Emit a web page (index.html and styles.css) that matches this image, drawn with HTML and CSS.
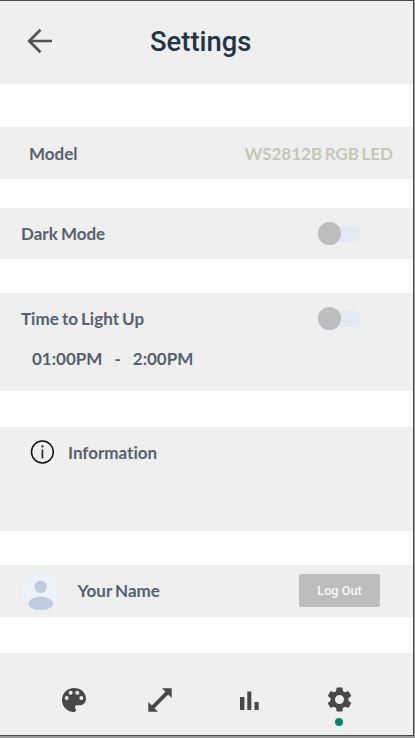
FILE: index.html
```
<!DOCTYPE html>
<html lang="en">
<head>
<meta charset="utf-8">
<title>Settings</title>
<link rel="stylesheet" href="styles.css">
</head>
<body>
<div class="screen">
  <header class="header">
    <svg class="back" viewBox="0 0 26 26"><path d="M25 13H2M13.5 1.8 2.2 13 13.5 24.2" fill="none" stroke="#525252" stroke-width="2.7"/></svg>
    <h1 class="title">Settings</h1>
  </header>
  <main class="content">
    <section class="row row-model">
      <span class="label">Model</span>
      <span class="value">WS2812B RGB LED</span>
    </section>
    <section class="row row-dark">
      <span class="label">Dark Mode</span>
      <span class="switch"><span class="knob"></span></span>
    </section>
    <section class="timer">
      <div class="timer-head">
        <span class="label">Time to Light Up</span>
        <span class="switch"><span class="knob"></span></span>
      </div>
      <div class="times"><span class="from">01:00PM</span><span class="dash">-</span><span class="to">2:00PM</span></div>
    </section>
    <section class="info">
      <svg class="info-icon" viewBox="0 0 24 24"><circle cx="12.4" cy="12" r="10.9" fill="none" stroke="#111" stroke-width="1.5"/><path d="M12.4 9.6v8.8" stroke="#222" stroke-width="1.6"/><circle cx="12.4" cy="6.4" r="1.1" fill="#222"/></svg>
      <span class="label info-label">Information</span>
    </section>
    <section class="row row-user">
      <svg class="avatar" viewBox="0 0 40 40"><circle cx="20.5" cy="20" r="19.5" fill="#eff1f8"/><circle cx="20.7" cy="15.8" r="6.2" fill="#bfccdb"/><ellipse cx="20.8" cy="32.4" rx="12.3" ry="6.7" fill="#bfccdb"/></svg>
      <span class="label name">Your Name</span>
      <button class="logout">Log Out</button>
    </section>
  </main>
  <nav class="nav">
    <svg class="icon palette" viewBox="3 3 18 18"><path d="M12 3a9 9 0 0 0 0 18c.83 0 1.5-.67 1.5-1.5 0-.39-.15-.74-.39-1.01-.23-.26-.38-.61-.38-.99 0-.83.67-1.5 1.5-1.5H16c2.76 0 5-2.24 5-5 0-4.42-4.03-8-9-8zm-5.5 9a1.5 1.5 0 1 1 0-3 1.5 1.5 0 0 1 0 3zm3-4a1.5 1.5 0 1 1 0-3 1.5 1.5 0 0 1 0 3zm5 0a1.5 1.5 0 1 1 0-3 1.5 1.5 0 0 1 0 3zm3 4a1.5 1.5 0 1 1 0-3 1.5 1.5 0 0 1 0 3z"/></svg>
    <svg class="icon expand" viewBox="0 0 24 24"><path d="M14 .3h9.7V10l-3.5-3.5L6.5 20.2l3.5 3.5H.3V14l3.5 3.5L17.5 3.8z"/></svg>
    <svg class="icon bars" viewBox="0 0 19 19"><path d="M0 6h4.4v13H0zM7.3.5h4V19h-4zM14.5 11h4.2v8h-4.2z"/></svg>
    <span class="tab">
      <svg class="icon gear" viewBox="2 2 20 20"><path d="M19.14 12.94c.04-.3.06-.61.06-.94 0-.32-.02-.64-.07-.94l2.03-1.58c.18-.14.23-.41.12-.61l-1.92-3.32c-.12-.22-.37-.29-.59-.22l-2.39.96c-.5-.38-1.03-.7-1.62-.94l-.36-2.54c-.04-.24-.24-.41-.48-.41h-3.84c-.24 0-.43.17-.47.41l-.36 2.54c-.59.24-1.13.57-1.62.94l-2.39-.96c-.22-.08-.47 0-.59.22L2.74 8.87c-.12.21-.08.47.12.61l2.03 1.58c-.05.3-.09.63-.09.94s.02.64.07.94l-2.03 1.58c-.18.14-.23.41-.12.61l1.92 3.32c.12.22.37.29.59.22l2.39-.96c.5.38 1.03.7 1.62.94l.36 2.54c.05.24.24.41.48.41h3.84c.24 0 .44-.17.47-.41l.36-2.54c.59-.24 1.13-.56 1.62-.94l2.39.96c.22.08.47 0 .59-.22l1.92-3.32c.12-.22.07-.47-.12-.61l-2.01-1.58zM12 15.6A3.61 3.61 0 0 1 8.4 12c0-1.98 1.62-3.6 3.6-3.6s3.6 1.62 3.6 3.6-1.62 3.6-3.6 3.6z"/></svg>
      <span class="dot"></span>
    </span>
  </nav>
</div>
</body>
</html>
```
FILE: styles.css
```
* { box-sizing: border-box; }
html { background: #999; }
body { margin: 0; width: 415px; height: 738px; overflow: hidden; background: #999; }
.screen {
  display: flex;
  flex-direction: column;
  width: 414px;
  height: 736px;
  background: #fff;
  border: solid #4a4a4a;
  border-width: 1px 1px 1px 0;
  font-family: Lato, sans-serif;
  font-variant-ligatures: none;
}
.header { display: flex; align-items: center; height: 83px; padding-left: 27px; background: #efefef; }
.back { width: 26px; height: 26px; margin-top: -4px; }
.title { margin: -2px 0 0 97px; font: 500 27.4px/32px Roboto, sans-serif; color: #243447; }
.content { display: flex; flex-direction: column; flex: 1; padding-top: 43px; }
.label { font-size: 17px; line-height: 20px; font-weight: 700; color: #56616d; white-space: nowrap; word-spacing: -1px; }
.row { display: flex; align-items: center; height: 52px; background: #efefef; }
.row-model { justify-content: space-between; padding: 2px 20px 0 29px; }
.value { font-size: 17px; line-height: 20px; font-weight: 700; color: #c5c6b8; white-space: nowrap; word-spacing: -1.6px; }
.row-dark { justify-content: space-between; height: 51px; margin-top: 29px; padding: 0 52.5px 0 21px; }
.switch { display: flex; align-items: center; width: 34px; height: 16px; margin-left: auto; border-radius: 8px; background: #e4e8f1; }
.knob { flex: none; width: 23px; height: 23px; margin-left: -9px; border-radius: 50%; background: #bcbdbf; }
.timer { height: 98px; margin-top: 34px; padding: 15px 52.5px 0 21px; background: #efefef; }
.timer-head { display: flex; align-items: center; height: 21px; }
.times { display: flex; margin: 20px 0 0 11px; font-size: 17px; line-height: 20px; font-weight: 700; color: #56616d; }
.dash { margin: 0 12px; }
.info { display: flex; align-items: flex-start; height: 104px; margin-top: 36px; padding: 13px 0 0 30px; background: #efefef; }
.info-icon { width: 24px; height: 24px; }
.info-label { margin: 3px 0 0 14px; }
.row-user { margin-top: 34px; padding: 0 33px 0 20px; }
.avatar { width: 40px; height: 40px; }
.name { margin-left: 17.5px; }
.logout { width: 81px; height: 33px; margin: -2px 0 0 auto; padding: 0; border: 0; border-radius: 2px; background: #bcbdbf; color: #f8f8f8; font: 500 12.7px Roboto, sans-serif; }
.nav { display: flex; height: 82px; padding: 34px 0 0 62px; background: #efefef; }
.icon { display: block; fill: #484848; }
.palette { width: 24px; height: 24px; margin-top: 1px; }
.expand { width: 24px; height: 24px; margin: 1px 0 0 62px; }
.bars { width: 19px; height: 19px; margin: 4px 0 0 68px; }
.tab { display: flex; flex-direction: column; align-items: center; margin-left: 67.5px; }
.gear { width: 25px; height: 25px; }
.dot { width: 8px; height: 8px; margin-top: 6px; border-radius: 50%; background: #078568; }
```
